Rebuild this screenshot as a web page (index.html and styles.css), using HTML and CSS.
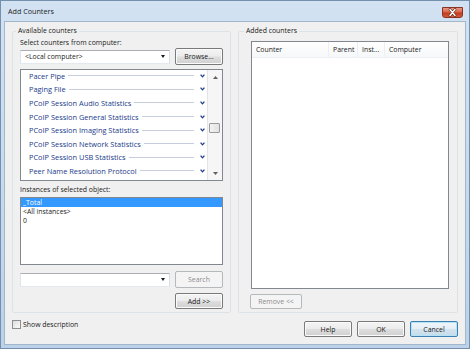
FILE: index.html
```html
<!DOCTYPE html>
<html lang="en">
<head>
    <meta charset="UTF-8">
    <title>Add Counters</title>
    <link rel="stylesheet" href="styles.css">
</head>
<body>
    <div class="window">
        <div class="titlebar">
            <span class="title">Add Counters</span>
            <div class="close-btn">
                <svg width="19" height="9" viewBox="0 0 19 9">
                    <path d="M7 1.5 L12 7.5 M12 1.5 L7 7.5" stroke="#5a2015" stroke-width="2.6" stroke-linecap="round"/>
                    <path d="M7 1.5 L12 7.5 M12 1.5 L7 7.5" stroke="#fff" stroke-width="1.5" stroke-linecap="round"/>
                </svg>
            </div>
        </div>

        <div class="client">
            <div class="groups">
                <!-- left side -->
                <div class="group group-left">
                    <div class="group-title">Available counters</div>
                    <div class="label">Select counters from computer:</div>
                    <div class="row">
                        <div class="combo"><span>&lt;Local computer&gt;</span><span class="arrow"></span></div>
                        <button class="btn btn-tall">Browse...</button>
                    </div>

                    <div class="counter-list">
                        <ul class="counters">
                            <li><span>Pacer Pipe</span><i class="rule"></i><svg class="chev" width="5" height="4" viewBox="0 0 5 4"><path d="M0.6 0.6 L2.5 2.8 L4.4 0.6" /></svg></li>
                            <li><span>Paging File</span><i class="rule"></i><svg class="chev" width="5" height="4" viewBox="0 0 5 4"><path d="M0.6 0.6 L2.5 2.8 L4.4 0.6" /></svg></li>
                            <li><span>PCoIP Session Audio Statistics</span><i class="rule"></i><svg class="chev" width="5" height="4" viewBox="0 0 5 4"><path d="M0.6 0.6 L2.5 2.8 L4.4 0.6" /></svg></li>
                            <li><span>PCoIP Session General Statistics</span><i class="rule"></i><svg class="chev" width="5" height="4" viewBox="0 0 5 4"><path d="M0.6 0.6 L2.5 2.8 L4.4 0.6" /></svg></li>
                            <li><span>PCoIP Session Imaging Statistics</span><i class="rule"></i><svg class="chev" width="5" height="4" viewBox="0 0 5 4"><path d="M0.6 0.6 L2.5 2.8 L4.4 0.6" /></svg></li>
                            <li><span>PCoIP Session Network Statistics</span><i class="rule"></i><svg class="chev" width="5" height="4" viewBox="0 0 5 4"><path d="M0.6 0.6 L2.5 2.8 L4.4 0.6" /></svg></li>
                            <li><span>PCoIP Session USB Statistics</span><i class="rule"></i><svg class="chev" width="5" height="4" viewBox="0 0 5 4"><path d="M0.6 0.6 L2.5 2.8 L4.4 0.6" /></svg></li>
                            <li><span>Peer Name Resolution Protocol</span><i class="rule"></i><svg class="chev" width="5" height="4" viewBox="0 0 5 4"><path d="M0.6 0.6 L2.5 2.8 L4.4 0.6" /></svg></li>
                        </ul>
                        <div class="scrollbar">
                            <div class="sb-btn"><svg width="5" height="3" viewBox="0 0 5 3"><path d="M0 3 L2.5 0 L5 3 Z" fill="#606060"/></svg></div>
                            <div class="sb-track"><div class="sb-thumb"></div></div>
                            <div class="sb-btn"><svg width="5" height="3" viewBox="0 0 5 3"><path d="M0 0 L2.5 3 L5 0 Z" fill="#606060"/></svg></div>
                        </div>
                    </div>

                    <div class="label label-gap">Instances of selected object:</div>
                    <ul class="instances">
                        <li class="selected">_Total</li>
                        <li>&lt;All instances&gt;</li>
                        <li>0</li>
                    </ul>

                    <div class="row row-search">
                        <div class="combo"><span></span><span class="arrow"></span></div>
                        <button class="btn btn-tall" disabled>Search</button>
                    </div>
                    <div class="row row-add">
                        <button class="btn">Add &gt;&gt;</button>
                    </div>
                </div>

                <!-- right side -->
                <div class="group group-right">
                    <div class="group-title">Added counters</div>
                    <div class="listview">
                        <div class="lv-header">
                            <span class="col col-counter">Counter</span>
                            <span class="col col-parent">Parent</span>
                            <span class="col col-inst">Inst...</span>
                            <span class="col col-computer">Computer</span>
                        </div>
                    </div>
                    <button class="btn btn-remove" disabled>Remove &lt;&lt;</button>
                </div>
            </div>

            <div class="footer">
                <label class="check"><span class="box"></span>Show description</label>
                <div class="actions">
                    <button class="btn">Help</button>
                    <button class="btn">OK</button>
                    <button class="btn btn-default">Cancel</button>
                </div>
            </div>
        </div>
    </div>
</body>
</html>
```

FILE: styles.css
```css
* {
    box-sizing: border-box;
}

body {
    margin: 0;
    font-family: "Open Sans", "Noto Sans", sans-serif;
    font-size: 6.9px;
    color: #1a1a1a;
    background: #fff;
}

.window {
    width: 470px;
    height: 349px;
    display: flex;
    flex-direction: column;
    padding: 0 3px 3px 3px;
    border: 1px solid #7590ac;
    background: linear-gradient(to bottom, #d2e2f3, #bcd2ea);
}

.titlebar {
    height: 20px;
    display: flex;
    align-items: flex-start;
    padding-left: 4px;
}

.title {
    flex: 1;
    line-height: 20px;
    font-size: 7.2px;
    color: #1c1c1c;
}

.close-btn {
    width: 21px;
    height: 11px;
    margin-top: 6px;
    margin-right: 3px;
    border: 1px solid #8a3324;
    border-radius: 0 0 3px 3px;
    background: linear-gradient(to bottom, #e99580 0%, #d9664b 45%, #c23a1f 55%, #d25a3e 100%);
    display: flex;
    align-items: center;
    justify-content: center;
}

.client {
    flex: 1;
    display: flex;
    flex-direction: column;
    background: #f0f0f0;
    border: 1px solid #a3b6ca;
}

.groups {
    flex: 1;
    display: flex;
    gap: 7px;
    padding: 9px 7px 0 7px;
}

.group {
    display: flex;
    flex-direction: column;
    border: 1px solid #dde2e6;
    border-radius: 2px;
}

.group-left {
    width: 219px;
    padding: 0 7px;
}

.group-right {
    width: 220px;
    padding: 0 8px 0 12px;
}

.group-title {
    align-self: flex-start;
    margin-top: -6px;
    line-height: 10px;
    padding: 0 2px;
    background: #f0f0f0;
}

.group-left .group-title {
    margin-left: -4px;
}

.group-right .group-title {
    margin-left: -7px;
}

.label {
    margin-top: 2px;
    line-height: 10px;
}

.label-gap {
    margin-top: 4px;
}

.row {
    display: flex;
    align-items: center;
    justify-content: space-between;
    height: 17px;
}

.row-search {
    margin-top: 6px;
}

.row-add {
    margin-top: 5px;
    height: 16px;
    justify-content: flex-end;
}

.combo {
    width: 150px;
    height: 14px;
    display: flex;
    align-items: center;
    justify-content: space-between;
    padding: 0 4px 0 4px;
    background: #fff;
    border: 1px solid #abadb3;
    border-color: #abadb3 #dbdfe6 #e3e9ef #e2e3ea;
}

.arrow {
    width: 0;
    height: 0;
    border-left: 2.5px solid transparent;
    border-right: 2.5px solid transparent;
    border-top: 3px solid #1a1a1a;
}

.btn {
    font-family: inherit;
    font-size: 6.9px;
    color: #1a1a1a;
    width: 48px;
    height: 16px;
    padding: 0;
    border: 1px solid #7a7a7a;
    border-radius: 2px;
    background: linear-gradient(to bottom, #f4f4f4 0%, #ececec 48%, #dedede 52%, #d0d0d0 100%);
    box-shadow: inset 0 0 0 1px #fbfbfb;
}

.btn-tall {
    height: 17px;
}

.btn:disabled {
    color: #8c8c8c;
    border-color: #b5b9bc;
    background: #f4f4f4;
    box-shadow: none;
}

.btn-remove {
    align-self: flex-start;
    width: 52px;
    height: 15px;
    margin-top: 5px;
    margin-left: -1px;
}

.btn-default {
    border-color: #3c7fb1;
    background: linear-gradient(to bottom, #f0f6fa 0%, #e4eef5 48%, #d3e3ef 52%, #c7dbe9 100%);
    box-shadow: inset 0 0 0 1px #b6e2f8;
}

/* available counters */
.counter-list {
    margin-top: 4px;
    height: 112px;
    display: flex;
    background: #fff;
    border: 1px solid #828790;
}

.counters {
    flex: 1;
    list-style: none;
    margin: -1px 0 0 0;
    padding: 0;
    overflow: hidden;
    font-size: 7.4px;
    color: #213a8a;
}

.counters li {
    height: 13.6px;
    display: flex;
    align-items: center;
    padding-left: 8px;
    padding-right: 2px;
}

.rule {
    flex: 1;
    height: 1px;
    margin: 0 6px 0 3px;
    background: #c6cede;
}

.chev path {
    fill: none;
    stroke: #203a8c;
    stroke-width: 1.3;
}

.scrollbar {
    width: 15px;
    display: flex;
    flex-direction: column;
    background: #f6f6f6;
    border-left: 1px solid #e4e4e4;
}

.sb-btn {
    height: 14px;
    display: flex;
    align-items: center;
    justify-content: center;
}

.sb-track {
    flex: 1;
}

.sb-thumb {
    width: 11px;
    height: 10px;
    margin: 39px 0 0 1px;
    border: 1px solid #9b9b9b;
    border-radius: 1px;
    background: linear-gradient(to right, #f3f3f3, #e2e2e2);
}

/* instances */
.instances {
    list-style: none;
    margin: 2px 0 0 0;
    padding: 0;
    height: 68px;
    background: #fff;
    border: 1px solid #828790;
}

.instances li {
    height: 9px;
    line-height: 9px;
    padding-left: 2px;
}

.instances .selected {
    background: #3399ff;
    color: #fff;
}

/* added counters */
.listview {
    margin-top: 5px;
    height: 248px;
    background: #fff;
    border: 1px solid #828790;
}

.lv-header {
    display: flex;
    height: 16px;
    line-height: 16px;
    background: linear-gradient(to bottom, #ffffff, #f6f7f9);
    border-bottom: 1px solid #eef0f3;
}

.col {
    padding-left: 4px;
    border-right: 1px solid #eceff3;
    white-space: nowrap;
}

.col-counter {
    width: 77px;
}

.col-parent {
    width: 29px;
}

.col-inst {
    width: 27px;
}

.col-computer {
    flex: 1;
    border-right: none;
}

/* bottom row */
.footer {
    height: 31px;
    display: flex;
    align-items: flex-start;
    padding: 7px 7px 0 7px;
}

.check {
    display: flex;
    align-items: center;
    gap: 2px;
    line-height: 9px;
}

.box {
    width: 9px;
    height: 9px;
    border: 1px solid #8f8f8f;
    background: linear-gradient(135deg, #dcdcdc, #fbfbfb);
}

.actions {
    margin-left: auto;
    margin-top: 1px;
    display: flex;
    gap: 5px;
}
```
